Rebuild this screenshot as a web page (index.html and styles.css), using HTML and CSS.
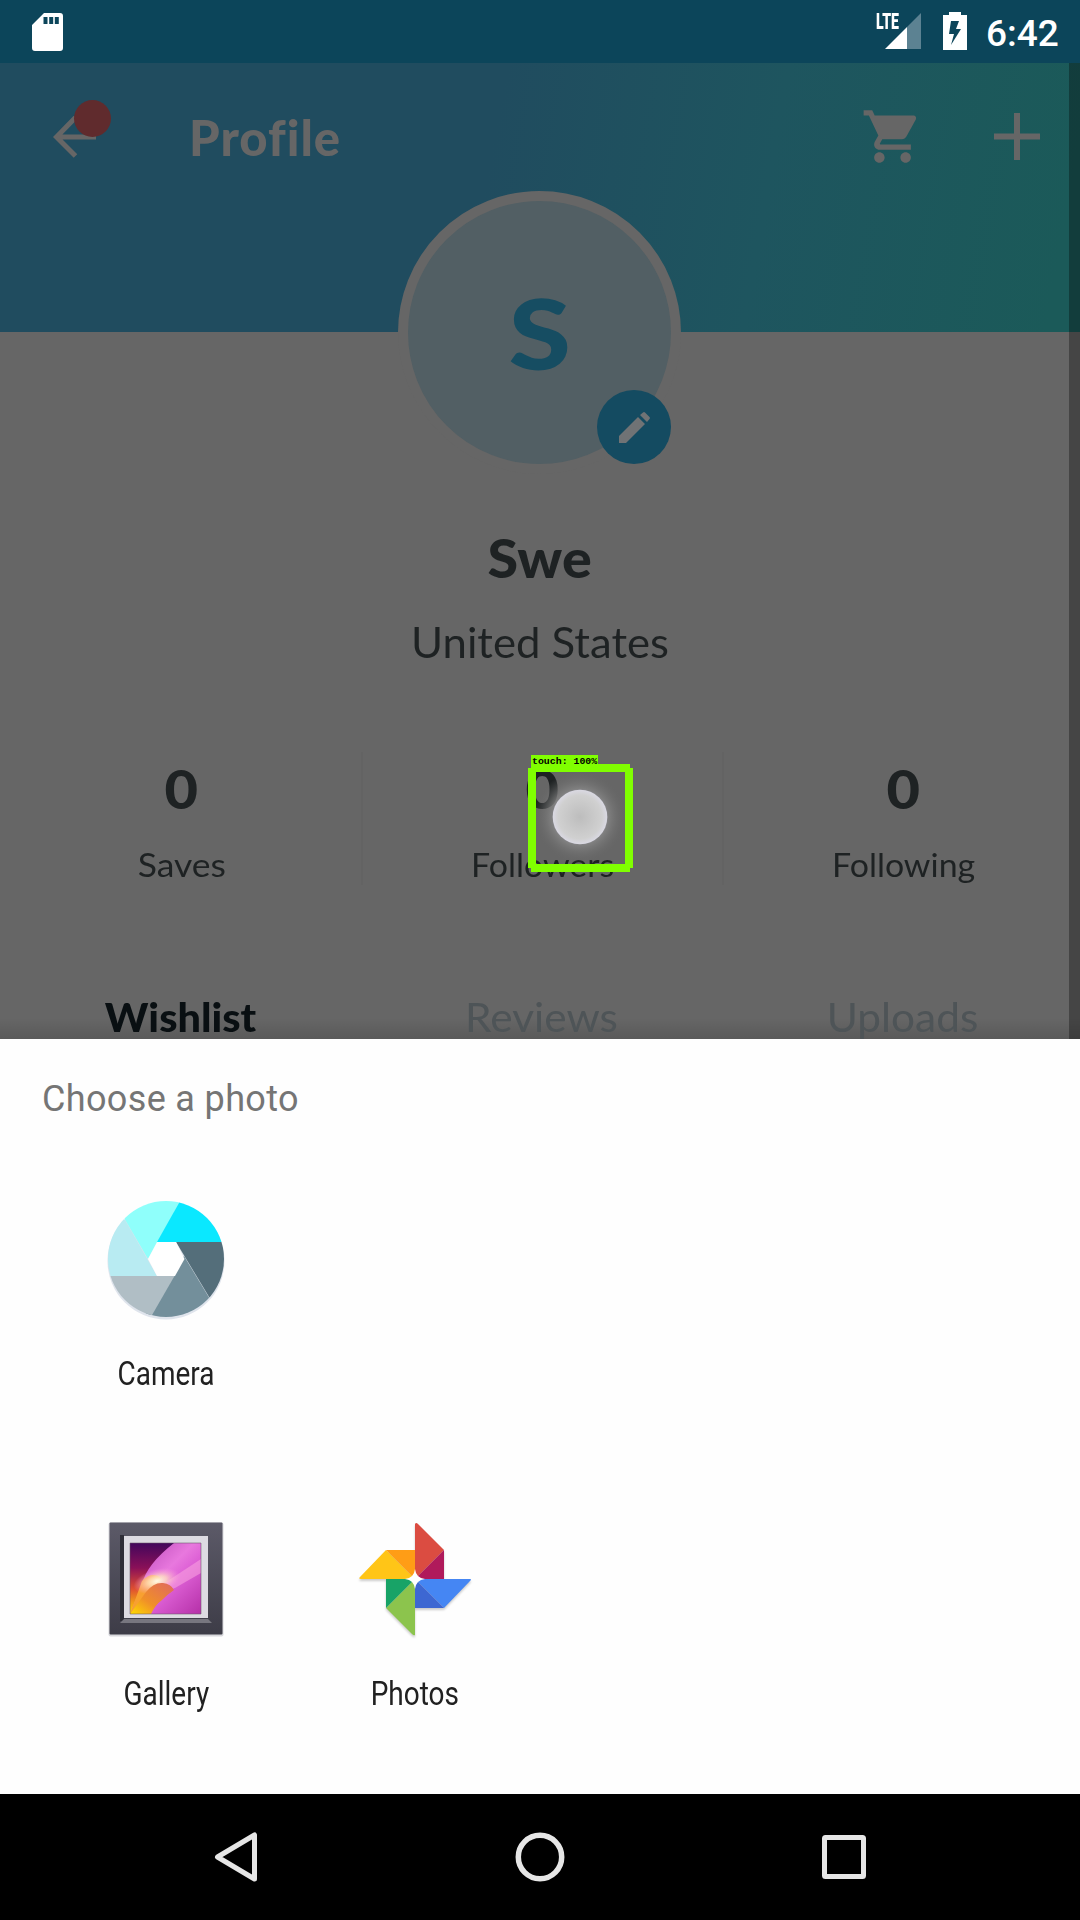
FILE: index.html
```html
<!DOCTYPE html>
<html lang="en">
<head>
<meta charset="utf-8">
<title>Profile</title>
<link rel="stylesheet" href="styles.css">
</head>
<body>
<div class="phone">
  <header class="status">
    <svg class="sd" width="31" height="38" viewBox="0 0 31 38"><path fill="#fff" fill-rule="evenodd" d="M12 0h16q3 0 3 3v32q0 3-3 3H3q-3 0-3-3V12zM11.500 4v7h4v-7zM17.200 4v7h4v-7zM22.800 4v7h4v-7z"/></svg>
    <div class="signal">
      <svg width="36" height="36" viewBox="0 0 36 36"><path fill="#5c8292" d="M36 0v36H22V14z"/><path fill="#fff" d="M22 14v22H0z"/></svg>
      <span class="lte">LTE</span>
    </div>
    <svg class="battery" width="24" height="38" viewBox="0 0 24 38"><path fill="#fff" fill-rule="evenodd" d="M6 0h12v3h6v35H0V3h6zM8 9L6 22h5L8 33l10-16h-5l3-8z"/></svg>
    <span class="clock">6:42</span>
  </header>

  <main class="profile">
    <div class="hero">
      <div class="back">
        <svg width="44" height="42" viewBox="0 0 44 42" fill="none" stroke="#666" stroke-width="5"><path d="M22.500 1.500L3.500 21l19 19M3.500 21H43"/></svg>
        <i class="alert"></i>
      </div>
      <h1 class="title">Profile</h1>
      <svg class="cart" width="63" height="63" viewBox="0 0 24 24" fill="#666"><path d="M7 18c-1.100 0-1.990.9-1.990 2S5.900 22 7 22s2-.9 2-2-.9-2-2-2zM1 2v2h2l3.600 7.590-1.350 2.450c-.16.28-.25.61-.25.96 0 1.100.9 2 2 2h12v-2H7.420c-.14 0-.25-.11-.25-.25l.03-.12.9-1.630h7.450c.75 0 1.410-.41 1.750-1.030l3.580-6.490A1.003 1.003 0 0 0 20 4H5.210l-.94-2H1zm16 16c-1.100 0-1.990.9-1.990 2s.89 2 1.990 2 2-.9 2-2-.9-2-2-2z"/></svg>
      <svg class="plus" width="46" height="47" viewBox="0 0 46 47" stroke="#666" stroke-width="6"><path d="M0 23.500h46M23 0v47"/></svg>
    </div>
    <div class="avatar">
      <span class="initial">S</span>
      <div class="edit">
        <svg width="31" height="31" viewBox="0 0 31 31" fill="#707375"><path d="M0 31v-7L19 5l7 7L7 31zM21 3l3-2.500q1-.8 2 0l4.500 4.500q.8 1 0 2L28 10z"/></svg>
      </div>
    </div>
    <h2 class="name">Swe</h2>
    <p class="country">United States</p>
    <div class="stats">
      <div class="stat"><b>0</b><span class="saves">Saves</span></div>
      <div class="stat"><b>0</b><span class="followers">Followers</span></div>
      <div class="stat"><b>0</b><span class="following">Following</span></div>
    </div>
    <nav class="tabs">
      <span class="active">Wishlist</span><span class="reviews">Reviews</span><span class="uploads">Uploads</span>
    </nav>
    <div class="edge"></div>
    <div class="touch">
      <svg width="105" height="108" viewBox="0 0 105 108">
        <defs><radialGradient id="glow"><stop offset=".5" stop-color="#9c9baa"/><stop offset=".62" stop-color="#858585" stop-opacity=".8"/><stop offset="1" stop-color="#666" stop-opacity="0"/></radialGradient>
        <radialGradient id="dot"><stop offset="0" stop-color="#bdbdbd"/><stop offset=".8" stop-color="#d0d0d0"/><stop offset="1" stop-color="#dad9e3"/></radialGradient></defs>
        <circle cx="52" cy="53" r="46" fill="url(#glow)"/><circle cx="52" cy="53" r="27.300" fill="url(#dot)"/>
        <path fill="#80ff00" d="M3 0h99v4h3v100h-3v4H3v-4H0V4h3zM8 8v92h89V8z" fill-rule="evenodd"/>
      </svg>
      <span class="touch-label">touch: 100%</span>
    </div>
  </main>

  <section class="sheet">
    <h3 class="sheet-title">Choose a photo</h3>
    <div class="apps">
      <div class="app first">
        <svg width="126" height="126" viewBox="-63 -63 126 126">
          <defs><clipPath id="lens"><circle r="58"/></clipPath></defs>
          <circle cy="2" r="58.500" fill="#dfe4ec"/>
          <g clip-path="url(#lens)">
            <path fill="#b8ebf2" d="M-63-63L-41-39L-9 17L-63 17z"/>
            <path fill="#8ffffb" d="M-60-72L20-72L14-57L-18 0z"/>
            <path fill="#0ae8ff" d="M22-72L63-63V-17H-9z"/>
            <path fill="#738f9b" d="M18-3L62 70H-31z"/>
            <path fill="#546e7a" d="M10-17H63V71z"/>
            <path fill="#b0bec5" d="M-63 17H8.500L-22 70H-63z"/>
          </g>
          <path fill="#fff" d="M-9-17H10L18.500 0L9 17H-9L-18 0z"/>
        </svg>
        <span class="camera">Camera</span>
      </div>
      <div class="app">
        <svg width="126" height="126" viewBox="0 0 126 126">
          <defs>
            <linearGradient id="frame" x2="0" y2="1"><stop stop-color="#5c5a68"/><stop offset="1" stop-color="#3d3c47"/></linearGradient>
            <linearGradient id="pink" x2="1" y2="1"><stop stop-color="#b040b0"/><stop offset=".45" stop-color="#e878de"/><stop offset=".6" stop-color="#dd60d5"/><stop offset="1" stop-color="#b530a8"/></linearGradient>
            <linearGradient id="warm" x2="0" y2="1"><stop stop-color="#42065c"/><stop offset=".35" stop-color="#8a1058"/><stop offset=".65" stop-color="#e05030"/><stop offset="1" stop-color="#ffe000"/></linearGradient>
            <linearGradient id="petal" x1="0" y1="1" x2="1" y2="0"><stop stop-color="#ffdc00"/><stop offset=".4" stop-color="#f09028"/><stop offset="1" stop-color="#df6860"/></linearGradient>
            <radialGradient id="shine"><stop stop-color="#fffbe8"/><stop offset=".4" stop-color="#ffe0c0" stop-opacity=".8"/><stop offset="1" stop-color="#ff9ce0" stop-opacity="0"/></radialGradient>
            <clipPath id="art"><path d="M27 27h71v71H27z"/></clipPath>
          </defs>
          <rect x="5.500" y="6.500" width="115" height="114" rx="2" fill="#d8d8dc"/>
          <rect x="6.500" y="6.500" width="113" height="112" rx="1" fill="url(#frame)"/>
          <path fill="#2f2e38" d="M17 19h4v86h-4z"/><path fill="#77767f" d="M17 107l4-4h84l4 4z"/>
          <path fill="#dddbe2" d="M21 20h84v82H21z"/>
          <g clip-path="url(#art)">
            <path fill="url(#pink)" d="M27 27h71v71H27z"/>
            <path fill="#f8a0e0" opacity=".6" d="M98 43L60 68l-8 10 20-6 26-15z"/>
            <path fill="url(#warm)" d="M27 27h44Q44 48 39 68L27 98z"/>
            <path fill="#f8a030" d="M27 98l12-33q10-10 19-3L46 98z"/>
            <ellipse cx="54" cy="65" rx="24" ry="12" fill="url(#shine)" transform="rotate(-15 54 65)"/>
            <path fill="url(#petal)" d="M27 98L43 76q8-10 17-9 8 1 11 7-6 4-12 10-7 5-11 14z"/>
          </g>
          <path d="M27 27h71v71H27z" fill="none" stroke="#665367" stroke-opacity=".55"/>
        </svg>
        <span class="gallery">Gallery</span>
      </div>
      <div class="app">
        <svg class="pinwheel" width="126" height="126" viewBox="-63 -63 126 126">
          <path fill="#db4c41" d="M0-55q1-2 3 0L29-29 0 0z"/><path fill="#b01a5b" d="M29-29V0H0z"/>
          <path fill="#4586f3" d="M0 0H55q2 0 0 2L29 29z"/><path fill="#3d67d2" d="M0 0v29h29z"/>
          <path fill="#8cc44d" d="M0 0V56q-1 1-3-1L-29 29z"/><path fill="#18a367" d="M0 0h-29v29z"/>
          <path fill="#ffc517" d="M0 0H-54q-3 0-1-2L-29-29z"/><path fill="#ff9d16" d="M0 0v-29h-29z"/>
          <path fill="#fff" d="M0-10Q1-1 10 0 1 1 0 10-1 1-10 0-1-1 0-10z"/>
        </svg>
        <span class="photos">Photos</span>
      </div>
    </div>
  </section>

  <footer class="nav">
    <svg width="50" height="50" viewBox="0 0 50 50" fill="none" stroke="#e6e6e6" stroke-width="5" stroke-linejoin="round"><path d="M43.500 3v44L6.500 25z"/></svg>
    <svg width="50" height="50" viewBox="0 0 50 50" fill="none" stroke="#e6e6e6" stroke-width="5.500"><circle cx="25" cy="25" r="21.700"/></svg>
    <svg width="50" height="50" viewBox="0 0 50 50" fill="none" stroke="#e6e6e6" stroke-width="5"><rect x="5.500" y="5.500" width="39" height="39" rx="1"/></svg>
  </footer>
</div>
</body>
</html>
```
FILE: styles.css
```css
* { box-sizing: border-box; margin: 0; padding: 0; }
body { background: #000; }
svg { display: block; flex: none; }

.phone {
  width: 1080px;
  height: 1920px;
  display: flex;
  flex-direction: column;
  overflow: hidden;
  font-family: Lato, sans-serif;
  font-variant-ligatures: none;
}

/* Status bar */
.status {
  height: 63px;
  flex: none;
  background: #0c455a;
  color: #fff;
  display: flex;
  align-items: flex-start;
  padding: 12px 20px 0 32px;
  font-family: Roboto, sans-serif;
}
.sd { margin-top: 1px; }
.signal { position: relative; margin: 1px 22px 0 auto; }
.lte {
  position: absolute;
  left: -9px;
  top: -1px;
  font-size: 22px;
  line-height: 20px;
  font-weight: 900;
  transform: scaleX(.64);
  transform-origin: 0 0;
}
.clock {
  margin-left: 19px;
  width: 74px;
  font-size: 37px;
  line-height: 43px;
  font-weight: 500;
  white-space: nowrap;
}

/* Dimmed profile screen */
.profile {
  position: relative;
  height: 976px;
  flex: none;
  overflow: hidden;
  background: linear-gradient(transparent 955px, rgba(0,0,0,.12)) #666;
  display: flex;
  flex-direction: column;
  align-items: center;
  color: #1e2223;
}
.hero {
  width: 1080px;
  height: 269px;
  flex: none;
  display: flex;
  align-items: center;
  padding: 0 40px 122px 53px;
  background: linear-gradient(100deg, #204c5f 45%, #1e555f 70%, #1b5a59 97%);
}
.back { position: relative; }
.alert {
  position: absolute;
  left: 21px;
  top: -16px;
  width: 37px;
  height: 37px;
  border-radius: 50%;
  background: #602b2d;
}
.title {
  margin: 0 auto 0 92px;
  font-size: 49px;
  line-height: 60px;
  font-weight: 900;
  letter-spacing: 1px;
  color: #666;
}
.plus { margin-left: 70px; }

.avatar {
  position: relative;
  left: -.5px;
  width: 283px;
  height: 283px;
  flex: none;
  margin-top: -141px;
  border: 10px solid #666;
  border-radius: 50%;
  background: #525f64;
  display: flex;
  align-items: center;
  justify-content: center;
}
.initial {
  font-size: 97px;
  line-height: 116px;
  font-weight: 900;
  color: #164d62;
  transform: scaleX(1.17);
}
.edit {
  position: absolute;
  right: 0;
  bottom: 0;
  width: 74px;
  height: 74px;
  border-radius: 50%;
  background: #144b61;
  display: flex;
  align-items: center;
  justify-content: center;
}
.name { margin-top: 51.5px; font-size: 53px; line-height: 64px; font-weight: 900; transform: scaleX(1.05); }
.country { margin-top: 27px; font-size: 42px; line-height: 50px; transform: scaleX(1.04); }

.stats, .tabs {
  align-self: flex-start;
  width: 1083px;
  flex: none;
  display: grid;
  grid-template-columns: repeat(3, 361px);
  text-align: center;
}
.stats { margin-top: 85px; height: 128px; }
.stat { display: flex; flex-direction: column; align-items: center; padding: 7px 0 0 2px; }
.stat + .stat { border-left: 2px solid #636363; padding-left: 0; }
.stat b { font-size: 53px; line-height: 60px; font-weight: 900; transform: scaleX(1.09); }
.stat span { margin-top: 26px; font-size: 32px; line-height: 40px; transform: scaleX(1.06); }
.stat .saves { transform: scaleX(1.11); }
.tabs { margin-top: 112px; font-size: 40px; line-height: 50px; color: #4e5457; }
.tabs span { transform: scaleX(1.06); }
.tabs .active { font-weight: 900; color: #090f12; transform: scaleX(1.035); }

.edge {
  position: absolute;
  top: 0;
  right: 0;
  width: 11px;
  height: 100%;
  background: rgba(0,0,0,.32);
}
.touch { position: absolute; left: 528px; top: 701px; }
.touch-label {
  position: absolute;
  left: 3px;
  top: -9px;
  width: 67px;
  height: 11px;
  padding-left: 1px;
  background: #80ff00;
  color: #000;
  font: 700 9.9px/14px "Liberation Mono", monospace;
  white-space: nowrap;
}

/* Chooser sheet */
.sheet {
  height: 755px;
  flex: none;
  background: #fefefe;
  padding: 36px 42px 0;
  font-family: Roboto, sans-serif;
}
.sheet-title {
  font-size: 36px;
  line-height: 48px;
  font-weight: 400;
  letter-spacing: .35px;
  color: #757575;
}
.apps {
  display: grid;
  grid-template-columns: repeat(4, 249px);
  grid-auto-rows: 320px;
  margin: 73px 0 0 -1px;
}
.app { display: flex; flex-direction: column; align-items: center; }
.first { grid-column: 1 / -1; width: 249px; }
.app span {
  margin: 32px 0 0 1px;
  font-size: 33.5px;
  line-height: 40px;
  color: #212121;
  transform: scaleX(.835);
}
.pinwheel { filter: drop-shadow(0 2px 1px rgba(0,0,0,.2)); }

/* System navigation */
.nav {
  height: 126px;
  flex: none;
  background: #000;
  display: flex;
  align-items: center;
  justify-content: center;
  gap: 254px;
}
```
